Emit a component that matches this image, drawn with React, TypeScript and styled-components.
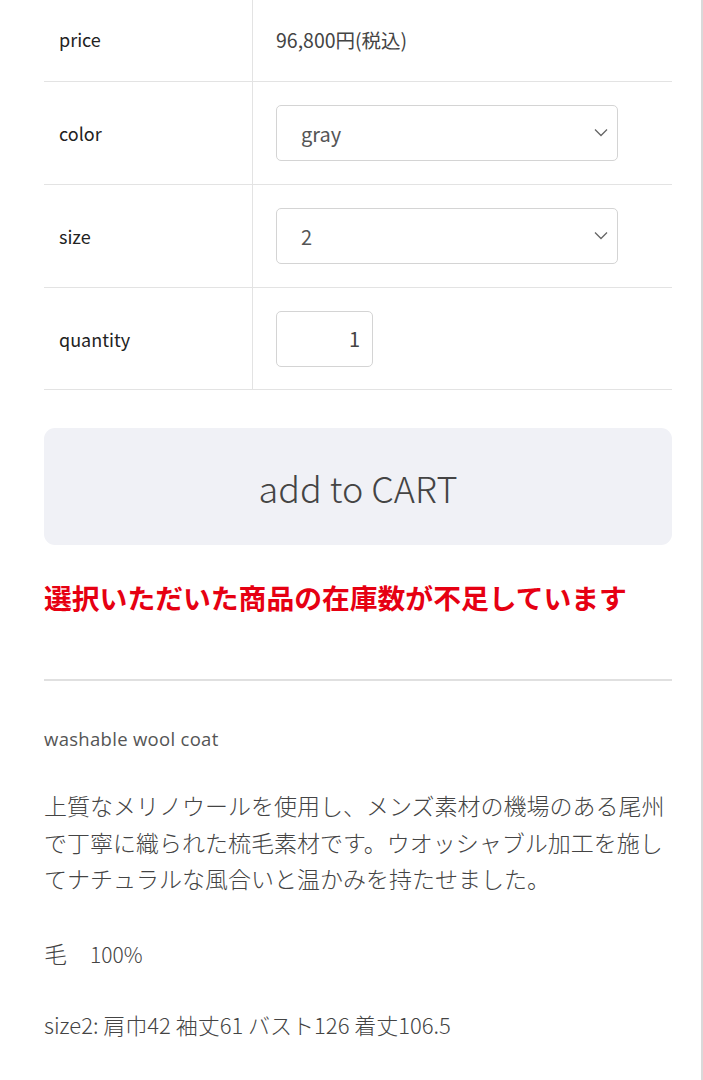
import React from 'react';
import styled, { createGlobalStyle } from 'styled-components';

const GlobalStyle = createGlobalStyle`
  html, body {
    margin: 0;
    padding: 0;
    background: #fff;
  }
  body {
    font-family: 'Noto Sans CJK JP', 'Noto Sans', sans-serif;
    color: #333;
  }
`;

const Page = styled.div`
  width: 701px;
  min-height: 1080px;
  border-right: 2px solid #d9d9d9;
`;

const Content = styled.div`
  padding: 0 29px 0 44px;
`;

const SpecTable = styled.div`
  display: grid;
  grid-template-columns: 209px 1fr;
`;

const Row = styled.div<{ $h: number; $lift?: number }>`
  display: contents;
  & > div {
    box-sizing: border-box;
    height: ${({ $h }) => $h}px;
    padding-bottom: ${({ $lift }) => $lift ?? 0}px;
    border-bottom: 1px solid #e3e3e3;
  }
`;

const Label = styled.div`
  display: flex;
  align-items: center;
  padding-left: 15px;
  border-right: 1px solid #e3e3e3;
  font-size: 18px;
  font-weight: 400;
  color: #222;
`;

const Value = styled.div`
  display: flex;
  align-items: center;
  padding-left: 23px;
  font-size: 19.5px;
  color: #444;
`;

const SelectBox = styled.div`
  position: relative;
  width: 342px;
  height: 56px;
  box-sizing: border-box;
  border: 1px solid #d4d4d4;
  border-radius: 5px;
  display: flex;
  align-items: center;
  padding-left: 24px;
  font-size: 20px;
  color: #555;
`;

const Chevron = styled.svg`
  position: absolute;
  right: 9px;
  top: 50%;
  margin-top: -5px;
`;

const QtyBox = styled.div`
  width: 97px;
  height: 56px;
  box-sizing: border-box;
  border: 1px solid #d4d4d4;
  border-radius: 5px;
  display: flex;
  align-items: center;
  justify-content: flex-end;
  padding-right: 12px;
  font-size: 20px;
  color: #444;
`;

const CartButton = styled.button`
  display: block;
  width: 100%;
  height: 117px;
  margin-top: 38px;
  border: none;
  border-radius: 11px;
  background: #f0f1f6;
  color: #444;
  font-family: 'Noto Sans CJK JP', sans-serif;
  font-weight: 300;
  font-size: 36px;
  cursor: pointer;
`;

const StockError = styled.p`
  margin: 36px 0 0;
  font-weight: 700;
  font-size: 27.8px;
  line-height: 32px;
  color: #e60012;
  white-space: nowrap;
`;

const Divider = styled.hr`
  margin: 66px 0 0;
  border: none;
  border-top: 2px solid #e0e0e0;
`;

const ItemName = styled.p`
  margin: 45px 0 0;
  font-family: 'Open Sans', sans-serif;
  font-size: 18.5px;
  letter-spacing: 0.3px;
  color: #555;
`;

const Description = styled.p<{ $size?: number; $top: number }>`
  margin: ${({ $top }) => $top}px 0 0;
  font-size: ${({ $size }) => $size ?? 23}px;
  font-weight: 300;
  line-height: 36.6px;
  color: #444;
`;

const Small = styled.span`
  font-size: 21px;
`;

const ChevronIcon = () => (
  <Chevron width="14" height="9" viewBox="0 0 14 9">
    <path d="M1 1.5 L7 7.5 L13 1.5" fill="none" stroke="#666" strokeWidth="1.3" />
  </Chevron>
);

export default function App() {
  return (
    <>
      <GlobalStyle />
      <Page>
        <Content>
          <SpecTable>
            <Row $h={82} $lift={3}>
              <Label>price</Label>
              <Value>96,800円(税込)</Value>
            </Row>
            <Row $h={103}>
              <Label>color</Label>
              <Value>
                <SelectBox>
                  gray
                  <ChevronIcon />
                </SelectBox>
              </Value>
            </Row>
            <Row $h={103}>
              <Label>size</Label>
              <Value>
                <SelectBox>
                  2
                  <ChevronIcon />
                </SelectBox>
              </Value>
            </Row>
            <Row $h={102}>
              <Label>quantity</Label>
              <Value>
                <QtyBox>1</QtyBox>
              </Value>
            </Row>
          </SpecTable>

          <CartButton>add to CART</CartButton>

          <StockError>選択いただいた商品の在庫数が不足しています</StockError>

          <Divider />

          <ItemName>washable wool coat</ItemName>

          <Description $top={36}>
            上質なメリノウールを使用し、メンズ素材の機場のある尾州で丁寧に織られた梳毛素材です。ウオッシャブル加工を施してナチュラルな風合いと温かみを持たせました。
          </Description>

          <Description $top={38}>
            毛　<Small>100%</Small>
          </Description>

          <Description $top={34} $size={22}>
            size2: 肩巾42 袖丈61 バスト126 着丈106.5
          </Description>
        </Content>
      </Page>
    </>
  );
}
